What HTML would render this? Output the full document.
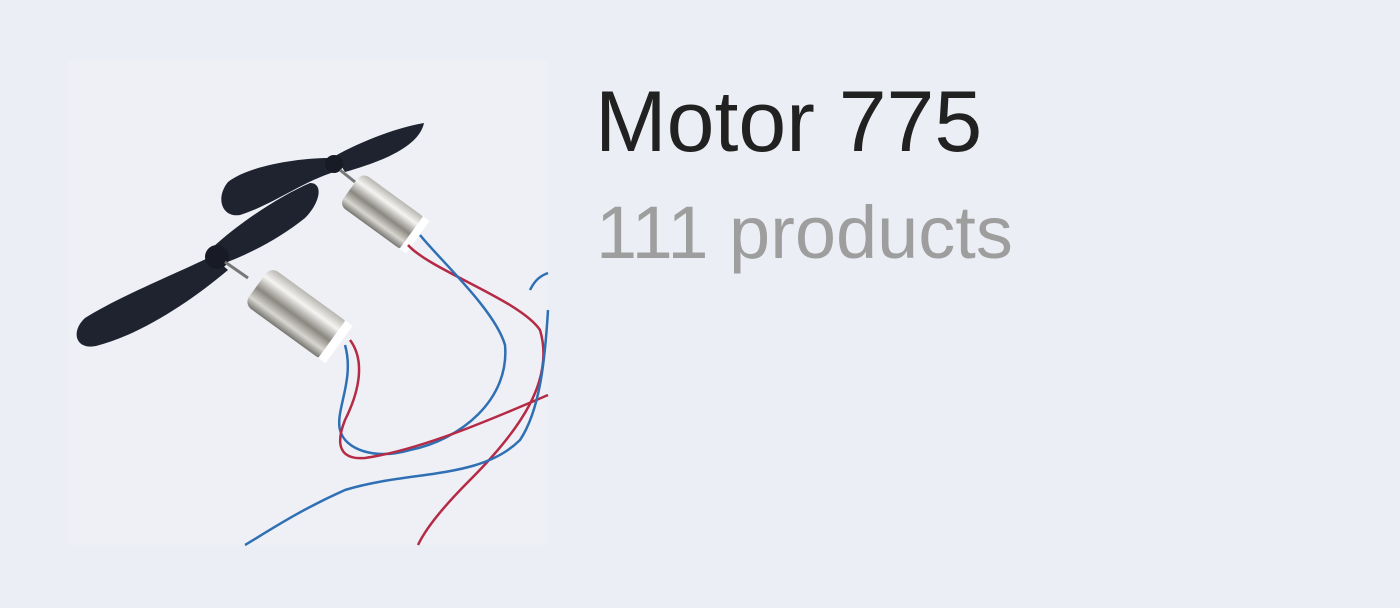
<!DOCTYPE html>
<html><head><meta charset="utf-8"><style>
html,body{margin:0;padding:0;width:1400px;height:608px;background:#eceef5;overflow:hidden;font-family:"Liberation Sans",sans-serif}
.t1{position:absolute;left:595px;top:72px;font-size:86px;color:#212121;line-height:100px}
.t2{position:absolute;left:596px;top:188px;font-size:74px;color:#9e9e9e;line-height:90px}
svg{position:absolute;left:0;top:0}
</style></head><body>
<svg width="1400" height="608" viewBox="0 0 1400 608">
<rect x="68" y="60" width="480" height="485" fill="#eef0f6"/>
<!-- back propeller -->
<path d="M330 158 C300 158 250 165 228 182 C215 198 222 218 240 215 C272 205 302 182 334 172 Z" fill="#1f2330"/>
<path d="M335 156 C360 142 395 128 424 123 C420 142 395 158 345 172 Z" fill="#1f2330"/>
<circle cx="334" cy="164" r="9" fill="#181b25"/>
<!-- front propeller -->
<path d="M212 248 C240 222 280 196 310 183 C324 183 320 203 305 218 C280 238 250 254 222 264 Z" fill="#1f2330"/>
<path d="M212 256 C180 272 120 296 85 318 C70 332 76 350 96 346 C140 335 190 302 228 270 Z" fill="#1f2330"/>
<circle cx="217" cy="257" r="12" fill="#181b25"/>
<line x1="225" y1="262" x2="248" y2="278" stroke="#777" stroke-width="3"/>
<line x1="340" y1="170" x2="355" y2="182" stroke="#777" stroke-width="3"/>
<!-- motors -->
<defs><linearGradient id="m" x1="0" y1="0" x2="0" y2="1"><stop offset="0" stop-color="#b8b6b0"/><stop offset=".25" stop-color="#f4f4f2"/><stop offset=".55" stop-color="#8a8780"/><stop offset=".8" stop-color="#d8d6d0"/><stop offset="1" stop-color="#77756f"/></linearGradient></defs>
<g transform="rotate(36 383 212)"><rect x="343" y="192" width="80" height="40" rx="8" fill="url(#m)"/><rect x="418" y="192" width="8" height="40" fill="#fff"/></g>
<g transform="rotate(36 297 314)"><rect x="248" y="291" width="98" height="46" rx="9" fill="url(#m)"/><rect x="340" y="291" width="9" height="46" fill="#fff"/></g>
<!-- wires -->
<g fill="none" stroke-width="2.5">
<path d="M408 245 C430 270 520 300 540 330 C555 380 520 430 470 480 C440 510 425 530 418 545" stroke="#b52a45"/>
<path d="M420 235 C440 260 495 310 505 345 C510 400 460 440 410 450 C375 460 345 450 340 430 C335 410 355 380 345 345" stroke="#2f6fb3"/>
<path d="M350 340 C365 360 360 390 345 420 C335 445 340 460 365 458 C420 450 490 420 548 395" stroke="#b52a45"/>
<path d="M548 310 C545 360 540 410 520 440 C480 480 410 470 345 490 C300 510 270 530 245 545" stroke="#2f6fb3"/>
<path d="M530 290 C535 280 540 276 548 273" stroke="#2f6fb3"/>
</g>
</svg>
<div class="t1">Motor 775</div>
<div class="t2">111 products</div>
</body></html>
